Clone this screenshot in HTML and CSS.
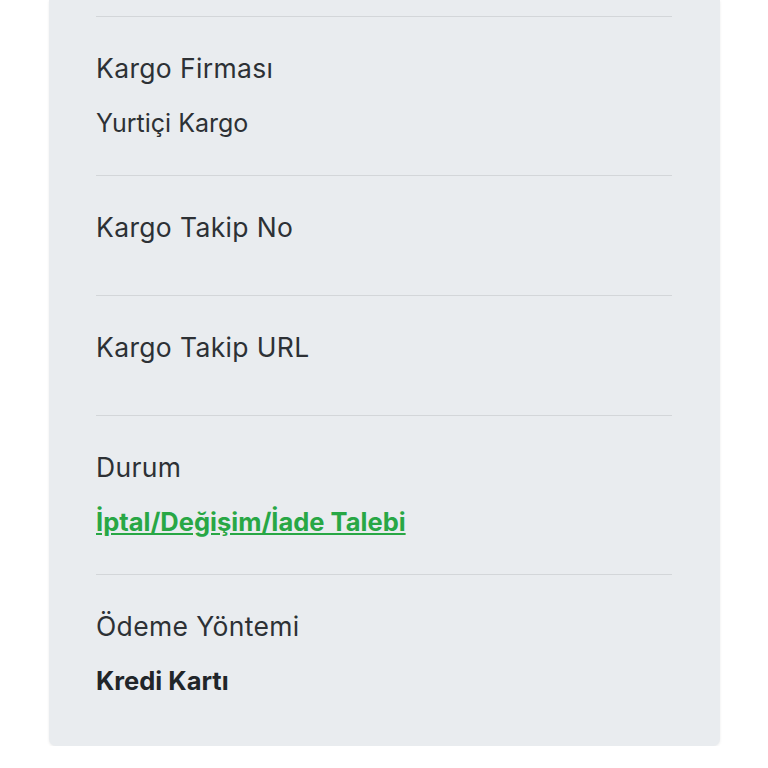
FILE: index.html
```html
<!DOCTYPE html>
<html lang="tr">
<head>
	<meta charset="UTF-8">
	<title>Sipariş Detayı</title>
	<link rel="stylesheet" href="styles.css">
</head>
<body>
	<div class="panel">
		<div class="info-item">
			<div class="info-label">Kargo Firması</div>
			<div class="info-value">Yurtiçi Kargo</div>
		</div>
		<div class="info-item">
			<div class="info-label">Kargo Takip No</div>
			<div class="info-value"></div>
		</div>
		<div class="info-item">
			<div class="info-label">Kargo Takip URL</div>
			<div class="info-value"></div>
		</div>
		<div class="info-item">
			<div class="info-label">Durum</div>
			<div class="info-value"><a class="status-link" href="#">İptal/Değişim/İade Talebi</a></div>
		</div>
		<div class="info-item">
			<div class="info-label">Ödeme Yöntemi</div>
			<div class="info-value info-strong">Kredi Kartı</div>
		</div>
	</div>
</body>
</html>
```

FILE: styles.css
```css
*{margin: 0;padding: 0;box-sizing: border-box;}
body{
	background-color: #fff;
	font-family: Inter, "Noto Sans", sans-serif;
	color: #212529;
}
.panel{
	width: 671px;
	margin-left: 49px;
	padding: 16px 48px 13px 47px;
	background-color: #e9ecef;
	border-radius: 0 0 7px 7px;
	box-shadow: 0 1px 3px rgba(0,0,0,0.08);
}
.info-item{
	border-top: 1px solid #d3d6d9;
	padding: 31px 0 32px;
}
.info-label{
	font-size: 26.5px;
	letter-spacing: 0.35px;
	line-height: 40px;
	color: #2d3135;
}
.info-value{
	margin-top: 15px;
	font-size: 25px;
	line-height: 40px;
	color: #2d3135;
}
.info-value:empty{
	display: none;
}
.info-item:has(.info-value:empty) .info-label{
	margin-bottom: 16px;
}
.status-link{
	font-size: 25.5px;
	color: #28a745;
	font-weight: 700;
	text-decoration: underline;
}
.info-strong{
	font-size: 25.5px;
	font-weight: 700;
	color: #212529;
}
```
